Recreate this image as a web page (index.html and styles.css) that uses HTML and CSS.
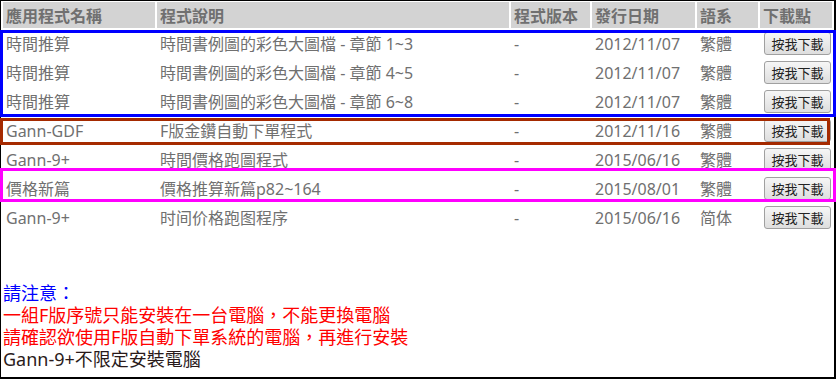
FILE: index.html
```html
<!DOCTYPE html>
<html lang="zh-Hant">
<head>
<meta charset="utf-8">
<title>下載</title>
<link rel="stylesheet" href="styles.css">
</head>
<body>
<div class="frame">
  <table class="apps">
    <colgroup>
      <col class="c-name"><col class="c-desc"><col class="c-ver"><col class="c-date"><col class="c-lang"><col class="c-dl">
    </colgroup>
    <thead>
      <tr><th>應用程式名稱</th><th>程式說明</th><th>程式版本</th><th>發行日期</th><th>語系</th><th>下載點</th></tr>
    </thead>
    <tbody>
      <tr><td>時間推算</td><td>時間書例圖的彩色大圖檔 - 章節 1~3</td><td>-</td><td>2012/11/07</td><td>繁體</td><td><button class="dl">按我下載</button></td></tr>
      <tr><td>時間推算</td><td>時間書例圖的彩色大圖檔 - 章節 4~5</td><td>-</td><td>2012/11/07</td><td>繁體</td><td><button class="dl">按我下載</button></td></tr>
      <tr><td>時間推算</td><td>時間書例圖的彩色大圖檔 - 章節 6~8</td><td>-</td><td>2012/11/07</td><td>繁體</td><td><button class="dl">按我下載</button></td></tr>
      <tr><td>Gann-GDF</td><td>F版金鑽自動下單程式</td><td>-</td><td>2012/11/16</td><td>繁體</td><td><button class="dl">按我下載</button></td></tr>
      <tr><td>Gann-9+</td><td>時間價格跑圖程式</td><td>-</td><td>2015/06/16</td><td>繁體</td><td><button class="dl">按我下載</button></td></tr>
      <tr><td>價格新篇</td><td>價格推算新篇p82~164</td><td>-</td><td>2015/08/01</td><td>繁體</td><td><button class="dl">按我下載</button></td></tr>
      <tr><td>Gann-9+</td><td>时间价格跑图程序</td><td>-</td><td>2015/06/16</td><td>简体</td><td><button class="dl">按我下載</button></td></tr>
    </tbody>
  </table>
  <div class="notes">
    <p class="note-title">請注意：</p>
    <p class="note-warn">一組F版序號只能安裝在一台電腦，不能更換電腦</p>
    <p class="note-warn">請確認欲使用F版自動下單系統的電腦，再進行安裝</p>
    <p class="note-plain">Gann-9+不限定安裝電腦</p>
  </div>
</div>
<div class="mark mark-blue"></div>
<div class="mark mark-brown"></div>
<div class="mark mark-pink"></div>
</body>
</html>
```

FILE: styles.css
```css
html, body {
  margin: 0;
  padding: 0;
  background: #fff;
}
body {
  position: relative;
  width: 837px;
  height: 379px;
  overflow: hidden;
  font-family: "Noto Sans", "Noto Sans CJK TC", sans-serif;
  font-size: 16px;
}
.frame {
  box-sizing: border-box;
  width: 836px;
  height: 379px;
  border-style: solid;
  border-color: #000;
  border-width: 1px 2px 2px 1px;
}
.apps {
  border-collapse: separate;
  border-spacing: 2px;
  table-layout: fixed;
  width: 833px;
  margin-top: -1px;
}
.c-name { width: 152px; }
.c-desc { width: 352px; }
.c-ver { width: 79px; }
.c-date { width: 103px; }
.c-lang { width: 61px; }
.c-dl { width: 72px; }
.apps th {
  background: #d3d3d3;
  color: #707070;
  font-weight: bold;
  text-align: left;
  height: 26px;
  padding: 0 3px;
  line-height: 20px;
  font-size: 16px;
  white-space: nowrap;
  font-family: "Noto Sans CJK TC", sans-serif;
}
.apps td {
  color: #707070;
  height: 27px;
  padding: 0 3px;
  line-height: 20px;
  white-space: nowrap;
  vertical-align: middle;
}
.apps td:last-child {
  padding: 0 0 0 4px;
}
.dl {
  box-sizing: border-box;
  width: 67px;
  height: 23px;
  padding: 0;
  font-family: "Noto Sans CJK TC", sans-serif;
  font-size: 13px;
  line-height: 20px;
  color: #222;
  background: linear-gradient(#f6f6f6, #dedede);
  border: 1px solid #a0a0a0;
  border-radius: 3px;
  display: block;
}
.notes {
  margin-top: 49px;
  padding-left: 2px;
}
.notes p {
  margin: 0;
  line-height: 22px;
  font-size: 18px;
  white-space: nowrap;
}
.note-title { color: #0000ff; }
.note-warn { color: #ff0000; }
.note-plain { color: #2a1a1a; }
.mark {
  position: absolute;
  box-sizing: border-box;
  border: 3px solid;
  pointer-events: none;
}
.mark-blue {
  left: 0;
  top: 30px;
  width: 836px;
  height: 87px;
  border-color: #0000ff;
}
.mark-brown {
  left: 0;
  top: 118px;
  width: 830px;
  height: 27px;
  border-color: #a52a00;
}
.mark-pink {
  left: 0;
  top: 168px;
  width: 836px;
  height: 34px;
  border-color: #ff00ff;
}
```
